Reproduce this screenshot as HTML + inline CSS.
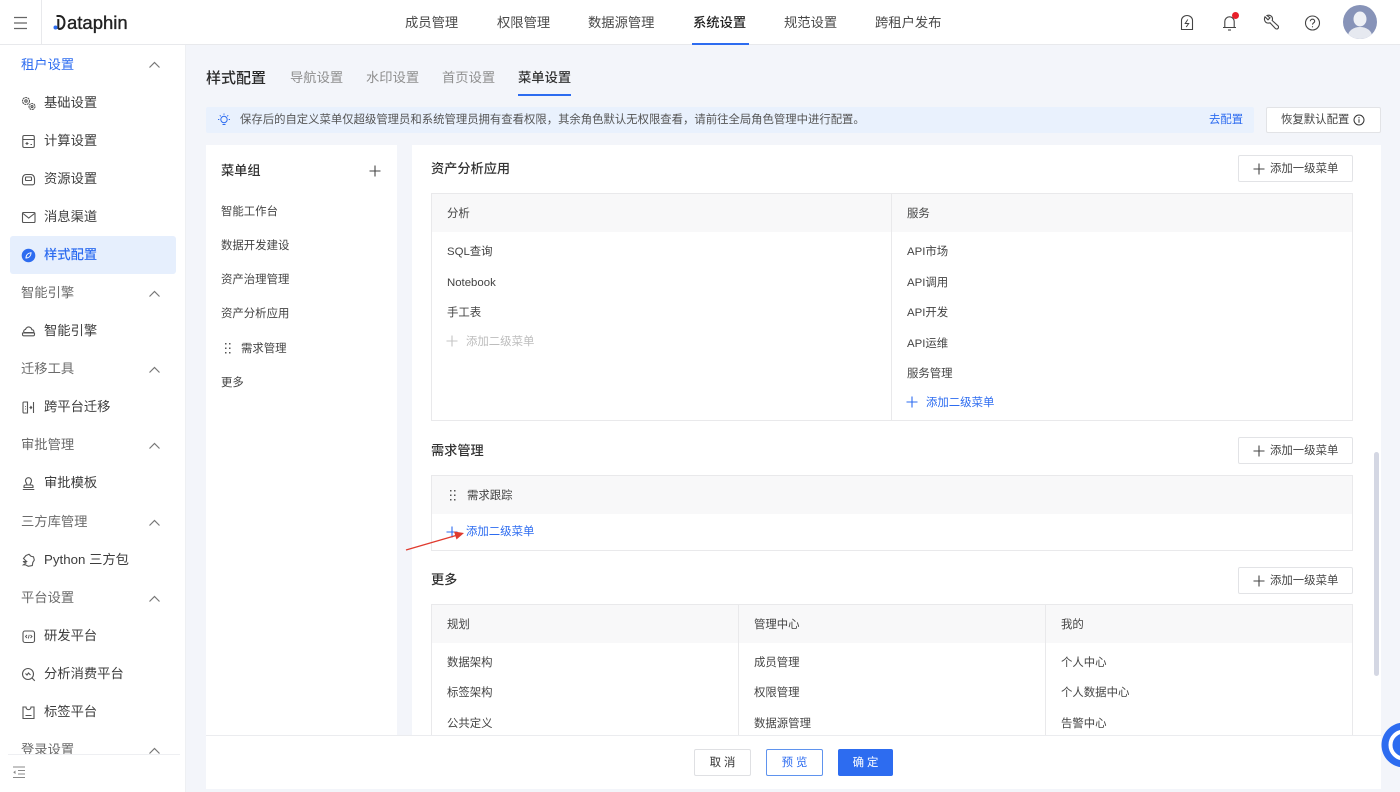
<!DOCTYPE html>
<html lang="zh"><head><meta charset="utf-8"><title>Dataphin</title>
<style>
*{box-sizing:border-box}
html,body{margin:0;padding:0;background:#f3f5fa}
#p{width:1400px;height:792px;overflow:hidden;position:relative;background:#f3f5fa;font-family:"Liberation Sans","Noto Sans CJK SC",sans-serif;color:#333;filter:blur(.3px)}
body{width:1400px;height:792px;overflow:hidden}
.a{position:absolute}
.t{position:absolute;white-space:nowrap;line-height:20px;height:20px}
.nav{font-size:13.3px;color:#4a4a4a;top:13px}
.sh{font-size:13.3px;color:#6b6b6b;left:21px}
.si{font-size:13.3px;color:#3d3d3d;left:44px}
.ic{position:absolute;left:21px;width:15px;height:15px;fill:none;stroke:#555;stroke-width:1.1}
.ch{position:absolute;left:148px;width:13px;height:8px;fill:none;stroke:#777;stroke-width:1.2}
.s{font-size:11.4px;color:#444}
.h{font-size:13.2px;color:#333;font-weight:500}
.btn{position:absolute;left:1238px;width:115px;height:27px;background:#fff;border:1px solid #e2e3e6;border-radius:2px}
.btn span{position:absolute;left:31px;top:3px;font-size:11.4px;line-height:20px;color:#444;white-space:nowrap}
.btn svg{position:absolute;left:14px;top:7px;width:12px;height:12px;stroke:#444;fill:none;stroke-width:1.1}
.tb{position:absolute;border:1px solid #e9e9eb;background:#fff;overflow:hidden}
.th{position:absolute;left:0;top:0;right:0;height:38px;background:#f8f8f9}
.v{position:absolute;top:0;bottom:0;width:1px;background:#e9e9eb}
</style></head><body><div id="p">

<!-- top bar -->
<div class="a" style="left:0;top:0;width:1400px;height:45px;background:#fff;border-bottom:1px solid #e8e9ec"></div>
<div class="a" style="left:41px;top:0;width:1px;height:45px;background:#e8e9ec"></div>
<svg class="a" style="left:13px;top:16px" width="16" height="14" fill="none" stroke="#666" stroke-width="1.2"><path d="M1 1.500h13M1 7h13M1 12.500h13"/></svg>
<svg class="a" style="left:53px;top:14px" width="15" height="17"><path d="M3.500 2h2.800c3.200 0 5.200 2.800 5.200 6.500s-2 6.500-5.200 6.500H5.300M5.300 15V5" fill="none" stroke="#222" stroke-width="2"/><circle cx="2.500" cy="13.500" r="2" fill="#2d6cf0"/></svg>
<div class="t" style="left:67px;top:13px;font-size:18.5px;color:#222;-webkit-text-stroke:.35px #222">ataphin</div>

<div class="t nav" style="left:405px">成员管理</div>
<div class="t nav" style="left:497px">权限管理</div>
<div class="t nav" style="left:588px">数据源管理</div>
<div class="t nav" style="left:693px;color:#222;font-weight:500">系统设置</div>
<div class="a" style="left:692px;top:43px;width:57px;height:2px;background:#2d6cf0"></div>
<div class="t nav" style="left:784px">规范设置</div>
<div class="t nav" style="left:875px">跨租户发布</div>

<svg class="a" style="left:1179px;top:14px" width="16" height="18" fill="none" stroke="#444" stroke-width="1.1"><path d="M2.500 15.500V6.500a5.500 5 0 0 1 11 0v9z"/><path d="M8.800 5.500L6.200 9.500h3.500L7.200 13" stroke-width="1"/></svg>
<svg class="a" style="left:1221px;top:13px" width="17" height="19" fill="none" stroke="#444" stroke-width="1.1"><path d="M2 14.500h13M3.800 14.500V8.500a4.700 4.700 0 0 1 9.400 0v6"/><path d="M7 17h3"/></svg>
<div class="a" style="left:1232px;top:12px;width:7px;height:7px;border-radius:50%;background:#e8202a"></div>
<svg class="a" style="left:1262px;top:14px" width="17" height="17" fill="none" stroke="#444" stroke-width="1.100"><path d="M3 2.800l3 3 2-2-3-2.300c2.500-1 5.500.5 5.500 3.500 0 .6-.1 1-.3 1.500l6 5.500c.8 1 .1 3-1.500 3-.6 0-1-.2-1.300-.5L8 8.800c-.6.200-1.100.3-1.700.3C3.300 9.100 1.500 5.800 3 2.800z"/></svg>
<svg class="a" style="left:1304px;top:15px" width="17" height="17" fill="none" stroke="#444" stroke-width="1.1"><circle cx="8.500" cy="8" r="7"/><path d="M6.300 6.300c0-1.300 1-2.100 2.200-2.100s2.200.8 2.200 2c0 1.600-2.200 1.600-2.200 3.400"/><path d="M8.500 11.200v1.100"/></svg>
<svg class="a" style="left:1343px;top:5px" width="34" height="34"><defs><clipPath id="c"><circle cx="17" cy="17" r="17"/></clipPath></defs><circle cx="17" cy="17" r="17" fill="#8793b8"/><g clip-path="url(#c)"><ellipse cx="17" cy="14" rx="6.500" ry="7.500" fill="#eef0f5"/><ellipse cx="17" cy="31" rx="12" ry="9" fill="#e6e9f0"/></g></svg>

<!-- sidebar -->
<div class="a" style="left:0;top:45px;width:186px;height:747px;background:#fff;border-right:1px solid #eef0f3"></div>
<div class="a" style="left:10px;top:236px;width:166px;height:38px;background:#e6effd;border-radius:3px"></div>

<div class="t sh" style="top:55px;color:#2d6cf0">租户设置</div>
<div class="t si" style="top:93px">基础设置</div>
<div class="t si" style="top:131px">计算设置</div>
<div class="t si" style="top:169px">资源设置</div>
<div class="t si" style="top:207px">消息渠道</div>
<div class="t si" style="top:245px;color:#2d6cf0;font-weight:500">样式配置</div>
<div class="t sh" style="top:283px">智能引擎</div>
<div class="t si" style="top:321px">智能引擎</div>
<div class="t sh" style="top:359px">迁移工具</div>
<div class="t si" style="top:397px">跨平台迁移</div>
<div class="t sh" style="top:435px">审批管理</div>
<div class="t si" style="top:473px">审批模板</div>
<div class="t sh" style="top:512px">三方库管理</div>
<div class="t si" style="top:550px">Python 三方包</div>
<div class="t sh" style="top:588px">平台设置</div>
<div class="t si" style="top:626px">研发平台</div>
<div class="t si" style="top:664px">分析消费平台</div>
<div class="t si" style="top:702px">标签平台</div>
<div class="t sh" style="top:740px">登录设置</div>

<svg class="ch" style="top:61px" viewBox="0 0 13 8"><path d="M1.500 6.500L6.500 1.500l5 5"/></svg>
<svg class="ch" style="top:290px" viewBox="0 0 13 8"><path d="M1.500 6.500L6.500 1.500l5 5"/></svg>
<svg class="ch" style="top:366px" viewBox="0 0 13 8"><path d="M1.500 6.500L6.500 1.500l5 5"/></svg>
<svg class="ch" style="top:442px" viewBox="0 0 13 8"><path d="M1.500 6.500L6.500 1.500l5 5"/></svg>
<svg class="ch" style="top:519px" viewBox="0 0 13 8"><path d="M1.500 6.500L6.500 1.500l5 5"/></svg>
<svg class="ch" style="top:595px" viewBox="0 0 13 8"><path d="M1.500 6.500L6.500 1.500l5 5"/></svg>
<svg class="ch" style="top:747px" viewBox="0 0 13 8"><path d="M1.500 6.500L6.500 1.500l5 5"/></svg>

<svg class="ic" style="top:96px" viewBox="0 0 15 15"><circle cx="5" cy="5" r="3.500" stroke-dasharray="2 .6"/><circle cx="5" cy="5" r="1.200"/><circle cx="11" cy="10.500" r="3" stroke-dasharray="2 .6"/><circle cx="11" cy="10.500" r="1"/></svg>
<svg class="ic" style="top:134px" viewBox="0 0 15 15"><rect x="1.800" y="1.500" width="11.500" height="12" rx="1.500"/><path d="M1.800 5.500h11.500M4.500 9.500h3M6 8v3M9.500 10.500h1.500"/></svg>
<svg class="ic" style="top:172px" viewBox="0 0 15 15"><path d="M1.500 11V6.500C1.500 4 3.500 2.500 5 2.500h5c1.500 0 3.500 1.500 3.500 4V11c0 1-.8 1.800-1.800 1.800H3.300C2.300 12.800 1.500 12 1.500 11z"/><rect x="4.500" y="5" width="6" height="3.500" rx=".8"/></svg>
<svg class="ic" style="top:210px" viewBox="0 0 15 15"><rect x="1.500" y="2.500" width="12.500" height="10" rx="1"/><path d="M2 3.500L7.700 8l5.800-4.500"/></svg>
<svg class="ic" style="top:248px;stroke:none" viewBox="0 0 15 15"><circle cx="7.500" cy="7.500" r="6.800" fill="#2d6cf0"/><path d="M5 10c0-3 2-5 5-5.300C10 8 8 10 5 10z" fill="none" stroke="#fff" stroke-width="1"/></svg>
<svg class="ic" style="top:324px" viewBox="0 0 15 15"><path d="M3 8.500C2 6.800 3.500 5.500 4.500 5.500 5 3.500 7 2.500 8.800 3.200c1.200.5 2 1.500 2 2.500 1.700 0 2.700 1.600 1.700 2.800z"/><path d="M1.500 9h12v1.500c0 .8-.6 1.300-1.300 1.300H2.800c-.7 0-1.300-.5-1.300-1.300z"/></svg>
<svg class="ic" style="top:400px" viewBox="0 0 15 15"><path d="M6.500 2H3a1 1 0 0 0-1 1v9a1 1 0 0 0 1 1h3.500zM12.500 2v11M8.500 7.500h2M9.500 6l1.200 1.500-1.200 1.500M4 6.500h.8M4 9h.8"/></svg>
<svg class="ic" style="top:476px" viewBox="0 0 15 15"><path d="M1.800 13.500h11.500M3 11.500v-1.200c0-.8.600-1.300 1.300-1.300h6.400c.7 0 1.300.5 1.300 1.300v1.200zM5.800 9c.5-1.500-1.300-2.500-1.300-4.300a3 3 0 0 1 6 0C10.500 6.500 8.700 7.500 9.200 9"/></svg>
<svg class="ic" style="top:553px" viewBox="0 0 15 15"><path d="M5 2.500l3-1.200 2 2 2.500.5.800 3.200-1.500 2.500-.5 3-4 .8-3-1.500H2.500l2.500-1.800L2 8.500h3.500L2.500 5.500z"/></svg>
<svg class="ic" style="top:629px" viewBox="0 0 15 15"><rect x="2" y="2" width="11.500" height="11.500" rx="2"/><path d="M6 6l-1.500 1.500L6 9M9.500 6L11 7.500 9.500 9M8.200 5.800L7.300 9.500" stroke-width=".9"/></svg>
<svg class="ic" style="top:667px" viewBox="0 0 15 15"><circle cx="7" cy="7" r="5.500"/><path d="M11 11l2.800 2.800M4.500 6.500L6 8l1.500-2L9.500 8"/></svg>
<svg class="ic" style="top:705px" viewBox="0 0 15 15"><path d="M2 2h3c0 3.500 5 3.500 5 0h3v11.500H2zM4.500 10.500h6"/></svg>

<div class="a" style="left:8px;top:754px;width:172px;height:38px;background:#fff;border-top:1px solid #eeeff2"></div>
<svg class="a" style="left:12px;top:766px" width="14" height="13" fill="none" stroke="#888" stroke-width="1"><path d="M1 1h12M6 4.500h7M6 8h7M1 11.500h12"/><path d="M3.500 4.500L1.200 6.300l2.300 1.800z" fill="#888" stroke="none"/></svg>

<!-- header -->
<div class="t" style="left:206px;top:69px;font-size:15px;font-weight:500;color:#2a2a2a">样式配置</div>
<div class="t" style="left:290px;top:68px;font-size:13.3px;color:#8f8f8f">导航设置</div>
<div class="t" style="left:366px;top:68px;font-size:13.3px;color:#8f8f8f">水印设置</div>
<div class="t" style="left:442px;top:68px;font-size:13.3px;color:#8f8f8f">首页设置</div>
<div class="t" style="left:518px;top:68px;font-size:13.3px;color:#333;font-weight:500">菜单设置</div>
<div class="a" style="left:518px;top:94px;width:53px;height:2px;background:#2d6cf0"></div>

<!-- banner -->
<div class="a" style="left:206px;top:107px;width:1048px;height:26px;background:#e9f1fd;border-radius:2px"></div>
<svg class="a" style="left:217px;top:113px" width="14" height="14" fill="none" stroke="#2d6cf0" stroke-width="1"><circle cx="7" cy="6.500" r="3.200"/><path d="M5.500 11.500h3M7 .5v1.300M1 6.500h1.300M11.700 6.500H13M2.800 2.300l1 1M11.200 2.300l-1 1"/></svg>
<div class="t s" style="left:240px;top:110px;color:#555;font-size:11.36px">保存后的自定义菜单仅超级管理员和系统管理员拥有查看权限，其余角色默认无权限查看，请前往全局角色管理中进行配置。</div>
<div class="t s" style="left:1209px;top:110px;color:#2d6cf0">去配置</div>
<div class="a" style="left:1266px;top:107px;width:115px;height:26px;background:#fff;border:1px solid #e2e3e6;border-radius:2px"></div>
<div class="t s" style="left:1281px;top:110px">恢复默认配置</div>
<svg class="a" style="left:1353px;top:114px" width="12" height="12" fill="none" stroke="#333" stroke-width="1"><circle cx="6" cy="6" r="5"/><path d="M6 5.200v3.500M6 3v1.200"/></svg>

<!-- left panel -->
<div class="a" style="left:206px;top:145px;width:191px;height:600px;background:#fff"></div>
<div class="t h" style="left:221px;top:161px">菜单组</div>
<svg class="a" style="left:369px;top:165px" width="12" height="12" stroke="#444" stroke-width="1.100"><path d="M6 .5v11M.5 6h11"/></svg>
<div class="t s" style="left:221px;top:202px">智能工作台</div>
<div class="t s" style="left:221px;top:236px">数据开发建设</div>
<div class="t s" style="left:221px;top:270px">资产治理管理</div>
<div class="t s" style="left:221px;top:304px">资产分析应用</div>
<svg class="a" style="left:225px;top:343px" width="6" height="11" fill="#555"><rect x="0" y="0" width="1.500" height="1.500"/><rect x="4" y="0" width="1.500" height="1.500"/><rect x="0" y="4.500" width="1.500" height="1.500"/><rect x="4" y="4.500" width="1.500" height="1.500"/><rect x="0" y="9" width="1.500" height="1.500"/><rect x="4" y="9" width="1.500" height="1.500"/></svg>
<div class="t s" style="left:241px;top:339px">需求管理</div>
<div class="t s" style="left:221px;top:373px">更多</div>

<!-- right panel -->
<div class="a" style="left:412px;top:145px;width:969px;height:600px;background:#fff"></div>
<div class="a" style="left:1374px;top:452px;width:5px;height:224px;background:#d4d7e3;border-radius:3px"></div>

<div class="t h" style="left:431px;top:159px">资产分析应用</div>
<div class="btn" style="top:155px"><svg viewBox="0 0 12 12"><path d="M6 .5v11M.5 6h11"/></svg><span>添加一级菜单</span></div>
<div class="tb" style="left:431px;top:193px;width:922px;height:228px">
  <div class="th"></div><div class="v" style="left:459px"></div>
</div>
<div class="t s" style="left:447px;top:204px">分析</div>
<div class="t s" style="left:907px;top:204px">服务</div>
<div class="t s" style="left:447px;top:242px">SQL查询</div>
<div class="t s" style="left:447px;top:273px">Notebook</div>
<div class="t s" style="left:447px;top:303px">手工表</div>
<svg class="a" style="left:446px;top:335px" width="12" height="12" stroke="#c4c4c4" stroke-width="1.100"><path d="M6 .5v11M.5 6h11"/></svg>
<div class="t s" style="left:466px;top:332px;color:#bdbdbd">添加二级菜单</div>
<div class="t s" style="left:907px;top:242px">API市场</div>
<div class="t s" style="left:907px;top:273px">API调用</div>
<div class="t s" style="left:907px;top:303px">API开发</div>
<div class="t s" style="left:907px;top:334px">API运维</div>
<div class="t s" style="left:907px;top:364px">服务管理</div>
<svg class="a" style="left:906px;top:396px" width="12" height="12" stroke="#2d6cf0" stroke-width="1.100"><path d="M6 .5v11M.5 6h11"/></svg>
<div class="t s" style="left:926px;top:393px;color:#2d6cf0">添加二级菜单</div>

<div class="t h" style="left:431px;top:441px">需求管理</div>
<div class="btn" style="top:437px"><svg viewBox="0 0 12 12"><path d="M6 .5v11M.5 6h11"/></svg><span>添加一级菜单</span></div>
<div class="tb" style="left:431px;top:475px;width:922px;height:76px"><div class="th"></div></div>
<svg class="a" style="left:450px;top:490px" width="6" height="11" fill="#555"><rect x="0" y="0" width="1.500" height="1.500"/><rect x="4" y="0" width="1.500" height="1.500"/><rect x="0" y="4.500" width="1.500" height="1.500"/><rect x="4" y="4.500" width="1.500" height="1.500"/><rect x="0" y="9" width="1.500" height="1.500"/><rect x="4" y="9" width="1.500" height="1.500"/></svg>
<div class="t s" style="left:467px;top:486px">需求跟踪</div>
<svg class="a" style="left:446px;top:526px" width="12" height="12" stroke="#2d6cf0" stroke-width="1.100"><path d="M6 .5v11M.5 6h11"/></svg>
<div class="t s" style="left:466px;top:522px;color:#2d6cf0">添加二级菜单</div>
<svg class="a" style="left:404px;top:528px" width="62" height="24"><path d="M2 22L52 7.500" stroke="#e03a2e" stroke-width="1.300" fill="none"/><path d="M60 5L50 3.500l2.500 8z" fill="#e03a2e"/></svg>

<div class="t h" style="left:431px;top:570px">更多</div>
<div class="btn" style="top:567px"><svg viewBox="0 0 12 12"><path d="M6 .5v11M.5 6h11"/></svg><span>添加一级菜单</span></div>
<div class="tb" style="left:431px;top:604px;width:922px;height:140px">
  <div class="th"></div><div class="v" style="left:306px"></div><div class="v" style="left:613px"></div>
</div>
<div class="t s" style="left:447px;top:615px">规划</div>
<div class="t s" style="left:754px;top:615px">管理中心</div>
<div class="t s" style="left:1061px;top:615px">我的</div>
<div class="t s" style="left:447px;top:653px">数据架构</div>
<div class="t s" style="left:447px;top:683px">标签架构</div>
<div class="t s" style="left:447px;top:714px">公共定义</div>
<div class="t s" style="left:754px;top:653px">成员管理</div>
<div class="t s" style="left:754px;top:683px">权限管理</div>
<div class="t s" style="left:754px;top:714px">数据源管理</div>
<div class="t s" style="left:1061px;top:653px">个人中心</div>
<div class="t s" style="left:1061px;top:683px">个人数据中心</div>
<div class="t s" style="left:1061px;top:714px">告警中心</div>

<!-- footer -->
<div class="a" style="left:206px;top:735px;width:1175px;height:54px;background:#fff;border-top:1px solid #ebecef"></div>
<div class="t" style="left:694px;top:749px;width:57px;height:27px;line-height:27px;padding-left:3px;text-align:center;background:#fff;border:1px solid #dfe0e3;border-radius:2px;font-size:11.4px;letter-spacing:3px;color:#333">取消</div>
<div class="t" style="left:766px;top:749px;width:57px;height:27px;line-height:27px;padding-left:3px;text-align:center;background:#fff;border:1px solid #5f93ee;border-radius:2px;font-size:11.4px;letter-spacing:3px;color:#2d6cf0">预览</div>
<div class="t" style="left:838px;top:749px;width:55px;height:27px;line-height:29px;padding-left:3px;text-align:center;background:#2d6cf0;border-radius:2px;font-size:11.4px;letter-spacing:3px;color:#fff">确定</div>

<!-- floating -->
<svg class="a" style="left:1381px;top:722px" width="19" height="46"><circle cx="23" cy="23" r="22.500" fill="#2d6cf0"/><circle cx="23" cy="23" r="13.500" fill="none" stroke="#fff" stroke-width="4"/></svg>
</div></body></html>
